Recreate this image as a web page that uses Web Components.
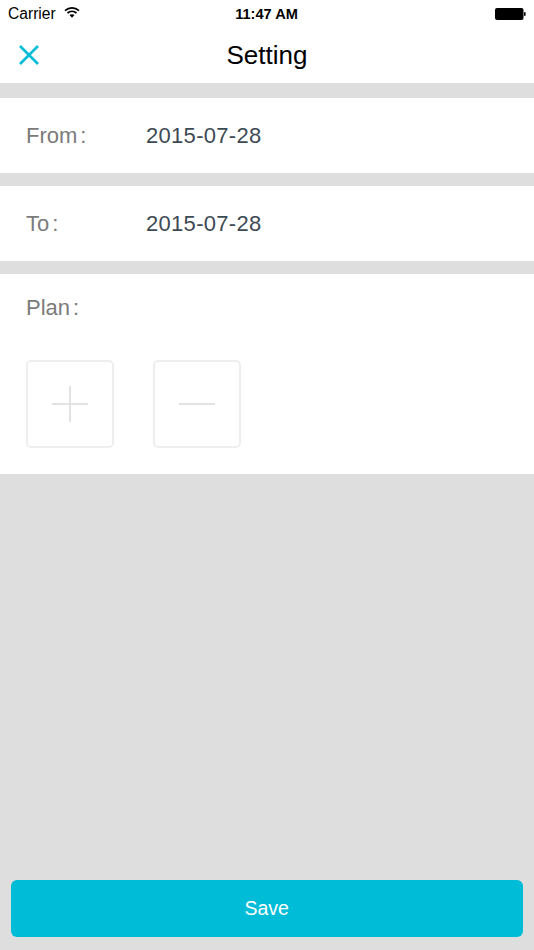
<!DOCTYPE html>
<html>
<head>
<meta charset="utf-8">
<title>Setting</title>
<style>
  html, body {
    margin: 0;
    height: 950px;
    background: #dedede;
    font-family: "Liberation Sans", Arial, sans-serif;
  }
  body {
    display: flex;
    flex-direction: column;
    overflow: hidden;
  }
</style>
</head>
<body>
<status-bar carrier="Carrier" time="11:47 AM"></status-bar>
<nav-bar>Setting</nav-bar>
<date-row label="From" style="margin-top: 15px">2015-07-28</date-row>
<date-row label="To" style="margin-top: 13px">2015-07-28</date-row>
<plan-panel label="Plan" style="margin-top: 13px">
  <square-button kind="plus" aria-label="Add"></square-button>
  <square-button kind="minus" aria-label="Remove"></square-button>
</plan-panel>
<save-button>Save</save-button>

<script>
class StatusBar extends HTMLElement {
  constructor() {
    super();
    this.attachShadow({ mode: "open" });
  }

  connectedCallback() {
    this.shadowRoot.innerHTML = `
      <style>
        :host {
          display: grid;
          grid-template-columns: 1fr auto 1fr;
          align-items: center;
          height: 28px;
          padding: 0 8px;
          background: #fff;
          color: #000;
          font-size: 15.6px;
        }
        .left { display: flex; align-items: center; gap: 8px; }
        .time { font-weight: bold; font-size: 14.6px; margin-left: -1px; }
        .right { display: flex; justify-content: flex-end; }
        svg { display: block; }
      </style>
      <div class="left">
        <span>${this.getAttribute("carrier")}</span>
        <svg width="16" height="12" viewBox="0 0 16 12" style="margin-top:-4px">
          <path d="M1 4.6C5 .9 11 .9 15 4.6" fill="none" stroke="#000" stroke-width="1.7"/>
          <path d="M3.5 7C6.1 4.7 9.9 4.7 12.5 7" fill="none" stroke="#000" stroke-width="1.7"/>
          <path d="M8 11.8 5.5 9C6.9 7.9 9.1 7.9 10.5 9Z" fill="#000"/>
        </svg>
      </div>
      <div class="time">${this.getAttribute("time")}</div>
      <div class="right">
        <svg width="31" height="12" viewBox="0 0 31 12">
          <rect x="0" y="0" width="28.5" height="12" rx="2" fill="#000"/>
          <rect x="29" y="4" width="1.6" height="4" rx=".8" fill="#000"/>
        </svg>
      </div>
    `;
  }
}
customElements.define("status-bar", StatusBar);

class NavBar extends HTMLElement {
  constructor() {
    super();
    this.attachShadow({ mode: "open" });
    this.shadowRoot.innerHTML = `
      <style>
        :host {
          display: flex;
          align-items: center;
          justify-content: center;
          position: relative;
          height: 55px;
          background: #fff;
          color: #000;
          font-size: 26px;
        }
        svg { position: absolute; left: 19px; top: 17px; }
      </style>
      <svg width="20" height="20" viewBox="0 0 20 20">
        <path d="M1 1 19 19M19 1 1 19" fill="none" stroke="#00bcd6" stroke-width="2.6"/>
      </svg>
      <slot></slot>
    `;
  }
}
customElements.define("nav-bar", NavBar);

class DateRow extends HTMLElement {
  constructor() {
    super();
    this.attachShadow({ mode: "open" });
  }

  connectedCallback() {
    this.shadowRoot.innerHTML = `
      <style>
        :host {
          display: flex;
          align-items: center;
          height: 75px;
          padding-left: 26px;
          background: #fff;
          font-size: 22px;
        }
        .label { width: 120px; color: #7b7b7b; }
        .colon { margin-left: 3px; }
        .value { color: #3d4a54; letter-spacing: .3px; }
      </style>
      <span class="label">${this.getAttribute("label")}<span class="colon">:</span></span>
      <span class="value"><slot></slot></span>
    `;
  }
}
customElements.define("date-row", DateRow);

class PlanPanel extends HTMLElement {
  constructor() {
    super();
    this.attachShadow({ mode: "open" });
  }

  connectedCallback() {
    this.shadowRoot.innerHTML = `
      <style>
        :host {
          display: flex;
          flex-direction: column;
          height: 200px;
          box-sizing: border-box;
          padding: 21px 26px 0;
          background: #fff;
          font-size: 22px;
          color: #7b7b7b;
        }
        .colon { margin-left: 3px; }
        .buttons { display: flex; gap: 39px; margin-top: 38.5px; }
      </style>
      <div>${this.getAttribute("label")}<span class="colon">:</span></div>
      <div class="buttons"><slot></slot></div>
    `;
  }
}
customElements.define("plan-panel", PlanPanel);

class SquareButton extends HTMLElement {
  constructor() {
    super();
    this.attachShadow({ mode: "open" });
  }

  connectedCallback() {
    const bar = '<rect x="0" y="17" width="36" height="2" fill="#e2e2e2"/>';
    const upright = '<rect x="17" y="0" width="2" height="36" fill="#e2e2e2"/>';
    this.shadowRoot.innerHTML = `
      <style>
        :host {
          display: flex;
          align-items: center;
          justify-content: center;
          box-sizing: border-box;
          width: 88px;
          height: 88px;
          border: 2px solid #eeeeee;
          border-radius: 5px;
        }
      </style>
      <svg width="36" height="36" viewBox="0 0 36 36">
        ${bar}${this.getAttribute("kind") === "plus" ? upright : ""}
      </svg>
    `;
  }
}
customElements.define("square-button", SquareButton);

class SaveButton extends HTMLElement {
  constructor() {
    super();
    this.attachShadow({ mode: "open" });
    this.shadowRoot.innerHTML = `
      <style>
        :host {
          display: flex;
          align-items: center;
          justify-content: center;
          height: 57px;
          margin: auto 11px 13px 10.5px;
          border-radius: 6px;
          background: #00bcd6;
          color: #fff;
          font-size: 19.5px;
        }
      </style>
      <slot></slot>
    `;
  }
}
customElements.define("save-button", SaveButton);
</script>
</body>
</html>
